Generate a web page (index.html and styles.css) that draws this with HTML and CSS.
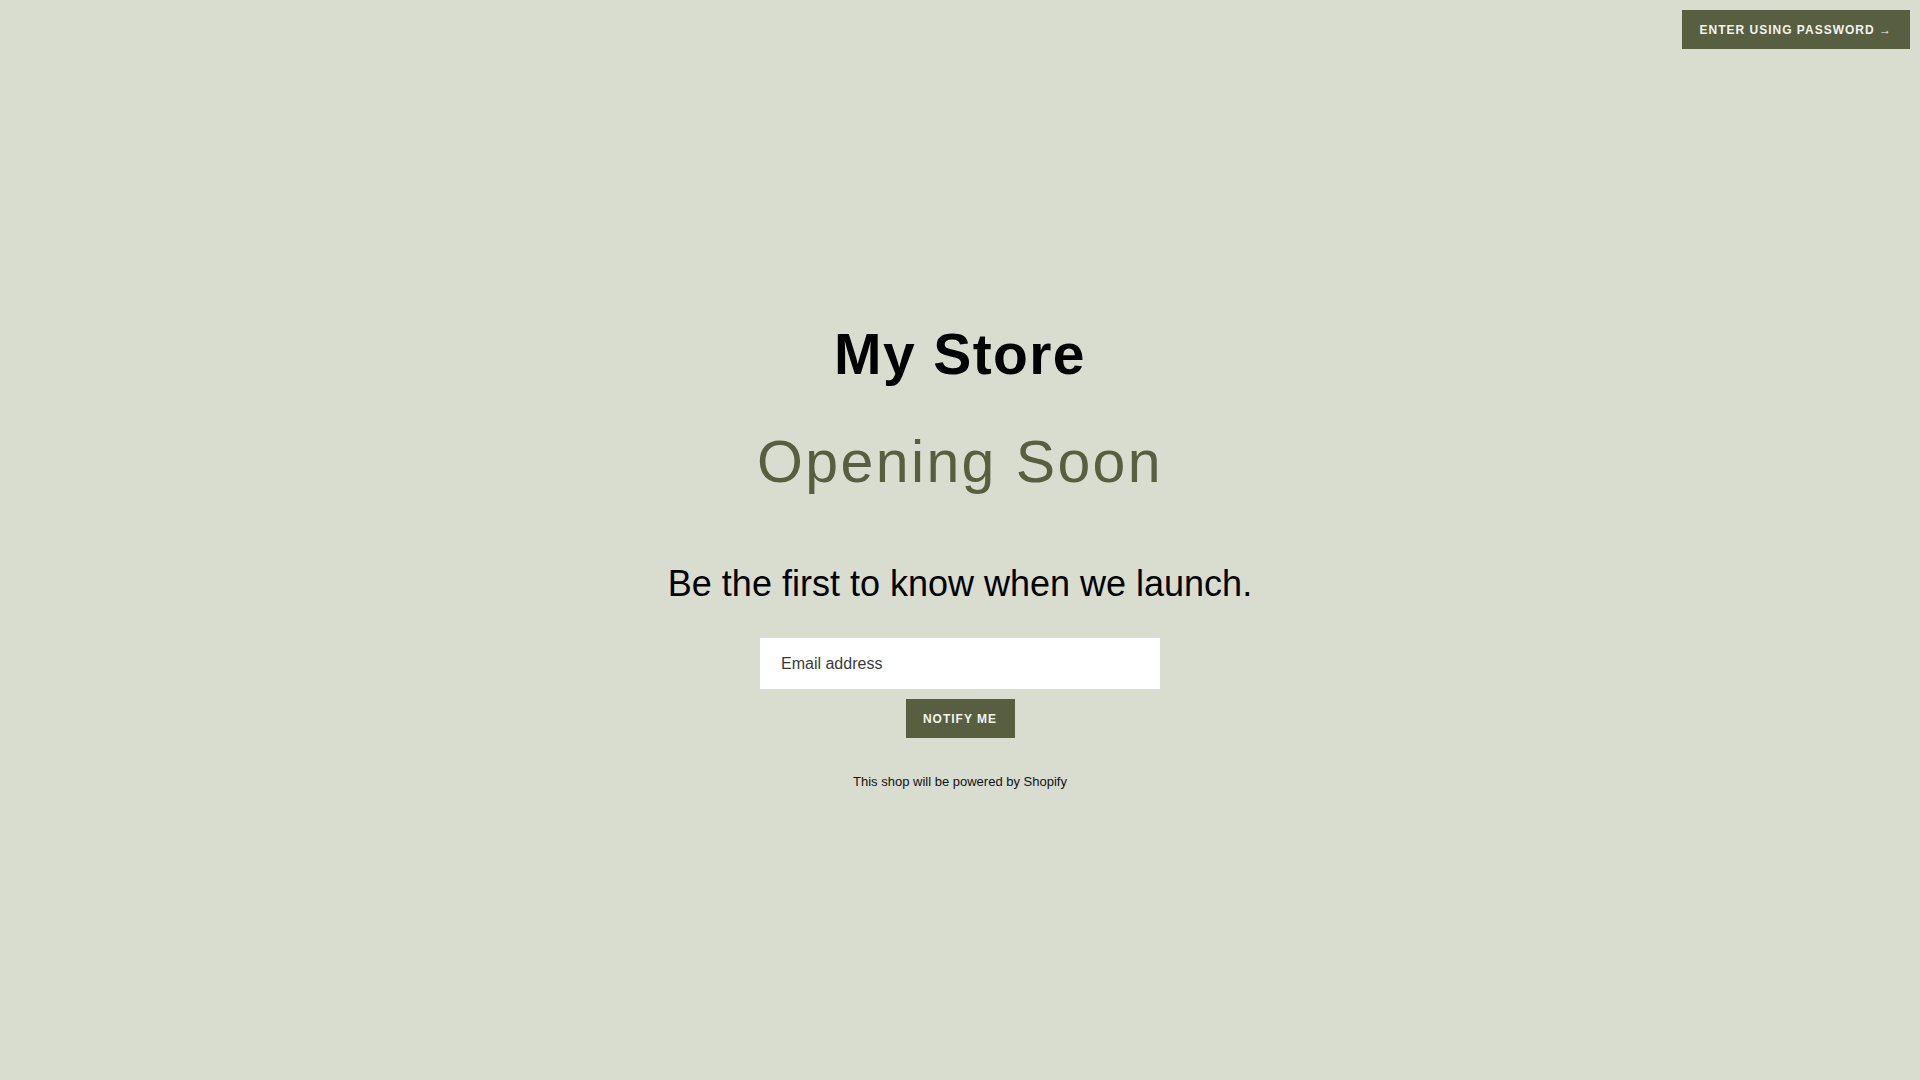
FILE: index.html
```html
<!DOCTYPE html>
<html lang="en">
<head>
<meta charset="utf-8">
<title>My Store</title>
<link rel="stylesheet" href="styles.css">
</head>
<body>
<header class="topbar">
  <a class="btn btn-password" href="#">ENTER USING PASSWORD →</a>
</header>
<main class="content">
  <h1 class="store-name">My Store</h1>
  <h2 class="opening">Opening Soon</h2>
  <p class="lead">Be the first to know when we launch.</p>
  <form class="signup">
    <input class="email" type="email" placeholder="Email address">
    <button class="btn btn-notify" type="button">NOTIFY ME</button>
  </form>
  <p class="powered">This shop will be powered by Shopify</p>
</main>
</body>
</html>
```

FILE: styles.css
```css
html, body {
  margin: 0;
  padding: 0;
}
body {
  background: #d9ddd0;
  font-family: "Liberation Sans", Arial, sans-serif;
  color: #000;
  min-height: 100vh;
}
.topbar {
  display: flex;
  justify-content: flex-end;
  padding: 10px;
  height: 39px;
}
.btn {
  display: inline-flex;
  align-items: center;
  justify-content: center;
  background: #575f40;
  color: #f3f3ee;
  font-family: "Liberation Sans", Arial, sans-serif;
  font-weight: bold;
  font-size: 12px;
  letter-spacing: 1px;
  text-decoration: none;
  border: none;
  height: 39px;
  padding: 0 18px;
  box-sizing: border-box;
}
.content {
  display: flex;
  flex-direction: column;
  align-items: center;
  text-align: center;
  padding-top: 262px;
}
.store-name {
  margin: 0;
  font-size: 57px;
  line-height: 67px;
  font-weight: bold;
  letter-spacing: 1.4px;
}
.opening {
  margin: 39px 0 0;
  font-size: 59px;
  line-height: 71px;
  font-weight: normal;
  color: #575f40;
  letter-spacing: 2.4px;
}
.lead {
  margin: 64px 0 0;
  font-size: 36px;
  line-height: 43px;
}
.signup {
  margin: 33px 0 0;
  display: flex;
  flex-direction: column;
  align-items: center;
  gap: 10px;
}
.email {
  width: 400px;
  height: 51px;
  box-sizing: border-box;
  border: none;
  background: #fff;
  padding: 0 21px;
  font-family: "Liberation Sans", Arial, sans-serif;
  font-size: 16px;
  color: #333;
  outline: none;
}
.email::placeholder {
  color: #3a3a3a;
  opacity: 1;
}
.btn-notify {
  width: 109px;
  padding: 0;
}
.powered {
  margin: 36px 0 0;
  font-size: 13px;
  line-height: 16px;
  color: #111;
}
```
